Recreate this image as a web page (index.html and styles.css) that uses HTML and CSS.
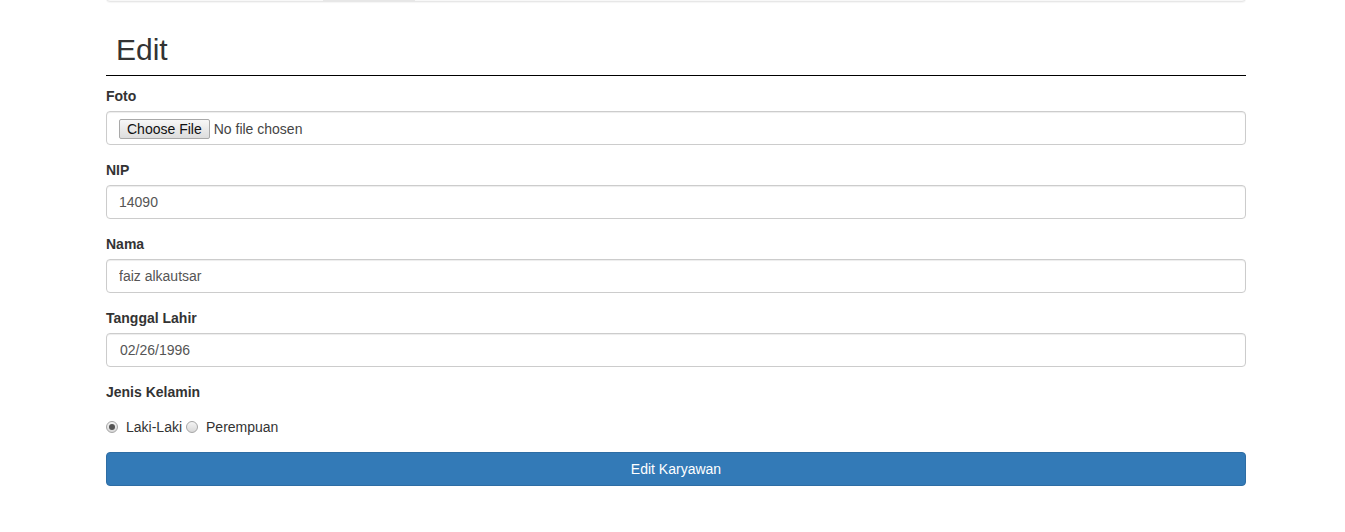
FILE: index.html
```html
<!DOCTYPE html>
<html lang="en">
<head>
    <meta charset="UTF-8">
    <meta name="viewport" content="width=device-width, initial-scale=1.0">
    <title>Edit Karyawan</title>
    <link rel="stylesheet" href="styles.css">
</head>
<body>
    <div class="container">
        <nav class="navbar">
            <span class="nav-brand"></span>
            <span class="nav-item active"></span>
        </nav>

        <h2 class="page-header">Edit</h2>

        <form class="edit-form">
            <div class="form-group">
                <label for="foto">Foto</label>
                <input id="foto" class="form-control file-control" type="file">
            </div>
            <div class="form-group">
                <label for="nip">NIP</label>
                <input id="nip" class="form-control" type="text" value="14090">
            </div>
            <div class="form-group">
                <label for="nama">Nama</label>
                <input id="nama" class="form-control" type="text" value="faiz alkautsar">
            </div>
            <div class="form-group">
                <label for="tgl">Tanggal Lahir</label>
                <input id="tgl" class="form-control date-control" type="text" value="02/26/1996">
            </div>
            <div class="form-group">
                <label>Jenis Kelamin</label>
                <div class="radio-row">
                    <input id="jk-l" class="radio" type="radio" name="jk" value="L" checked>
                    <span class="radio-text">Laki-Laki</span>
                    <input id="jk-p" class="radio" type="radio" name="jk" value="P">
                    <span class="radio-text">Perempuan</span>
                </div>
            </div>
            <button type="button" class="btn-primary">Edit Karyawan</button>
        </form>
    </div>
</body>
</html>
```

FILE: styles.css
```css
body {
    font-family: "Liberation Sans", Arial, sans-serif;
    font-size: 14px;
    line-height: 20px;
    color: #333;
    background-color: #fff;
    margin: 0;
    overflow: hidden;
}
.container {
    width: 1140px;
    margin-left: 106px;
}
.navbar {
    display: flex;
    height: 50px;
    margin-top: -48px;
    background-color: #f8f8f8;
    border: 1px solid #e7e7e7;
    border-radius: 4px;
    box-sizing: border-box;
    box-shadow: 0 1px 1px rgba(0,0,0,0.04);
}
.nav-brand {
    width: 216px;
}
.nav-item {
    width: 92px;
}
.nav-item.active {
    background-color: #e7e7e7;
}
.page-header {
    font-size: 30px;
    font-weight: 500;
    line-height: 33px;
    margin: 31px 0 10px;
    padding: 0 0 9px 10px;
    border-bottom: 1px solid #000;
}
.form-group {
    margin-bottom: 15px;
}
label {
    display: block;
    margin-bottom: 5px;
    font-weight: bold;
}
.form-control {
    display: block;
    width: 100%;
    height: 34px;
    padding: 6px 12px;
    font-family: inherit;
    font-size: 14px;
    line-height: 20px;
    color: #555;
    background-color: #fff;
    border: 1px solid #ccc;
    border-radius: 4px;
    box-shadow: inset 0 1px 1px rgba(0,0,0,0.075);
    box-sizing: border-box;
    margin: 0;
}
.date-control {
    padding-left: 13px;
}
.file-control {
    padding-top: 7px;
    color: #444;
}
.file-control::file-selector-button {
    font-family: "Liberation Sans", Arial, sans-serif;
    font-size: 14px;
    color: #111;
    height: 20px;
    padding: 0 7px;
    margin: 0 4px 0 0;
    border: 1px solid #a9a9a9;
    border-radius: 2px;
    background: linear-gradient(#f7f7f7, #dddddd);
    vertical-align: top;
}
.radio-row {
    display: flex;
    align-items: center;
    height: 20px;
    margin-top: 15px;
}
.radio {
    appearance: none;
    -webkit-appearance: none;
    width: 12px;
    height: 12px;
    margin: 0;
    border: 1px solid #a6a6a6;
    border-radius: 50%;
    background: linear-gradient(#f4f4f4, #d8d8d8);
    box-sizing: border-box;
    position: relative;
}
.radio:checked::after {
    content: "";
    position: absolute;
    left: 2px;
    top: 2px;
    width: 6px;
    height: 6px;
    border-radius: 50%;
    background-color: #555;
}
.radio-text {
    margin-left: 8px;
    margin-right: 4px;
}
.btn-primary {
    display: block;
    width: 100%;
    height: 34px;
    padding: 6px 12px;
    font-family: inherit;
    font-size: 14px;
    line-height: 20px;
    color: #fff;
    background-color: #337ab7;
    border: 1px solid #2e6da4;
    border-radius: 4px;
    cursor: pointer;
}
.btn-primary:hover {
    background-color: #286090;
}
```
